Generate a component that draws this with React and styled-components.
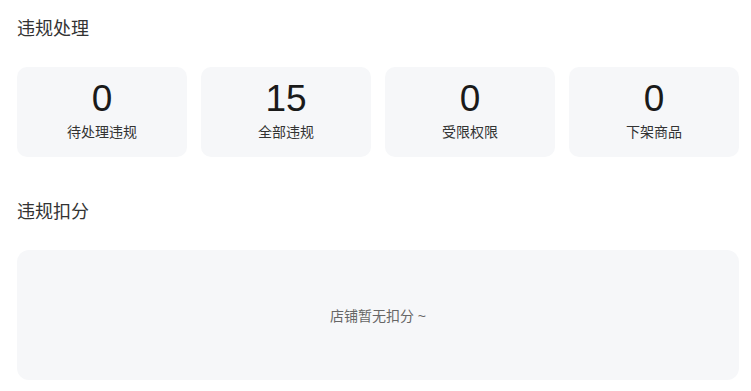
import React from "react";
import styled, { createGlobalStyle } from "styled-components";

const GlobalStyle = createGlobalStyle`
  body {
    margin: 0;
    background: #fff;
    font-family: "Liberation Sans", Arial, "Noto Sans CJK SC", sans-serif;
  }
`;

const stats = [
  { value: 0, label: "待处理违规" },
  { value: 15, label: "全部违规" },
  { value: 0, label: "受限权限" },
  { value: 0, label: "下架商品" },
];

const App = () => {
  return (
    <Page>
      <GlobalStyle />
      <SectionTitle>违规处理</SectionTitle>
      <StatGrid>
        {stats.map((s) => (
          <StatCard key={s.label}>
            <StatValue>{s.value}</StatValue>
            <StatLabel>{s.label}</StatLabel>
          </StatCard>
        ))}
      </StatGrid>
      <SectionTitle $spaced>违规扣分</SectionTitle>
      <EmptyBox>店铺暂无扣分 ~</EmptyBox>
    </Page>
  );
};

export default App;

const Page = styled.div`
  padding: 17px 12px 0 17px;
`;
const SectionTitle = styled.h2`
  margin: ${(p) => (p.$spaced ? "43px" : "0")} 0 26px;
  font-size: 18px;
  line-height: 24px;
  font-weight: 400;
  color: #333;
`;
const StatGrid = styled.div`
  display: grid;
  grid-template-columns: repeat(4, 1fr);
  gap: 14px;
`;
const StatCard = styled.div`
  height: 90px;
  box-sizing: border-box;
  padding-top: 10px;
  display: flex;
  flex-direction: column;
  align-items: center;
  gap: 1px;
  background: #f6f7f9;
  border-radius: 10px;
`;
const StatValue = styled.div`
  font-size: 37px;
  line-height: 44px;
  color: #1a1a1a;
`;
const StatLabel = styled.div`
  font-size: 14px;
  line-height: 20px;
  color: #333;
`;
const EmptyBox = styled.div`
  height: 130px;
  display: flex;
  align-items: center;
  justify-content: center;
  background: #f6f7f9;
  border-radius: 12px;
  font-size: 14px;
  color: #666;
`;
